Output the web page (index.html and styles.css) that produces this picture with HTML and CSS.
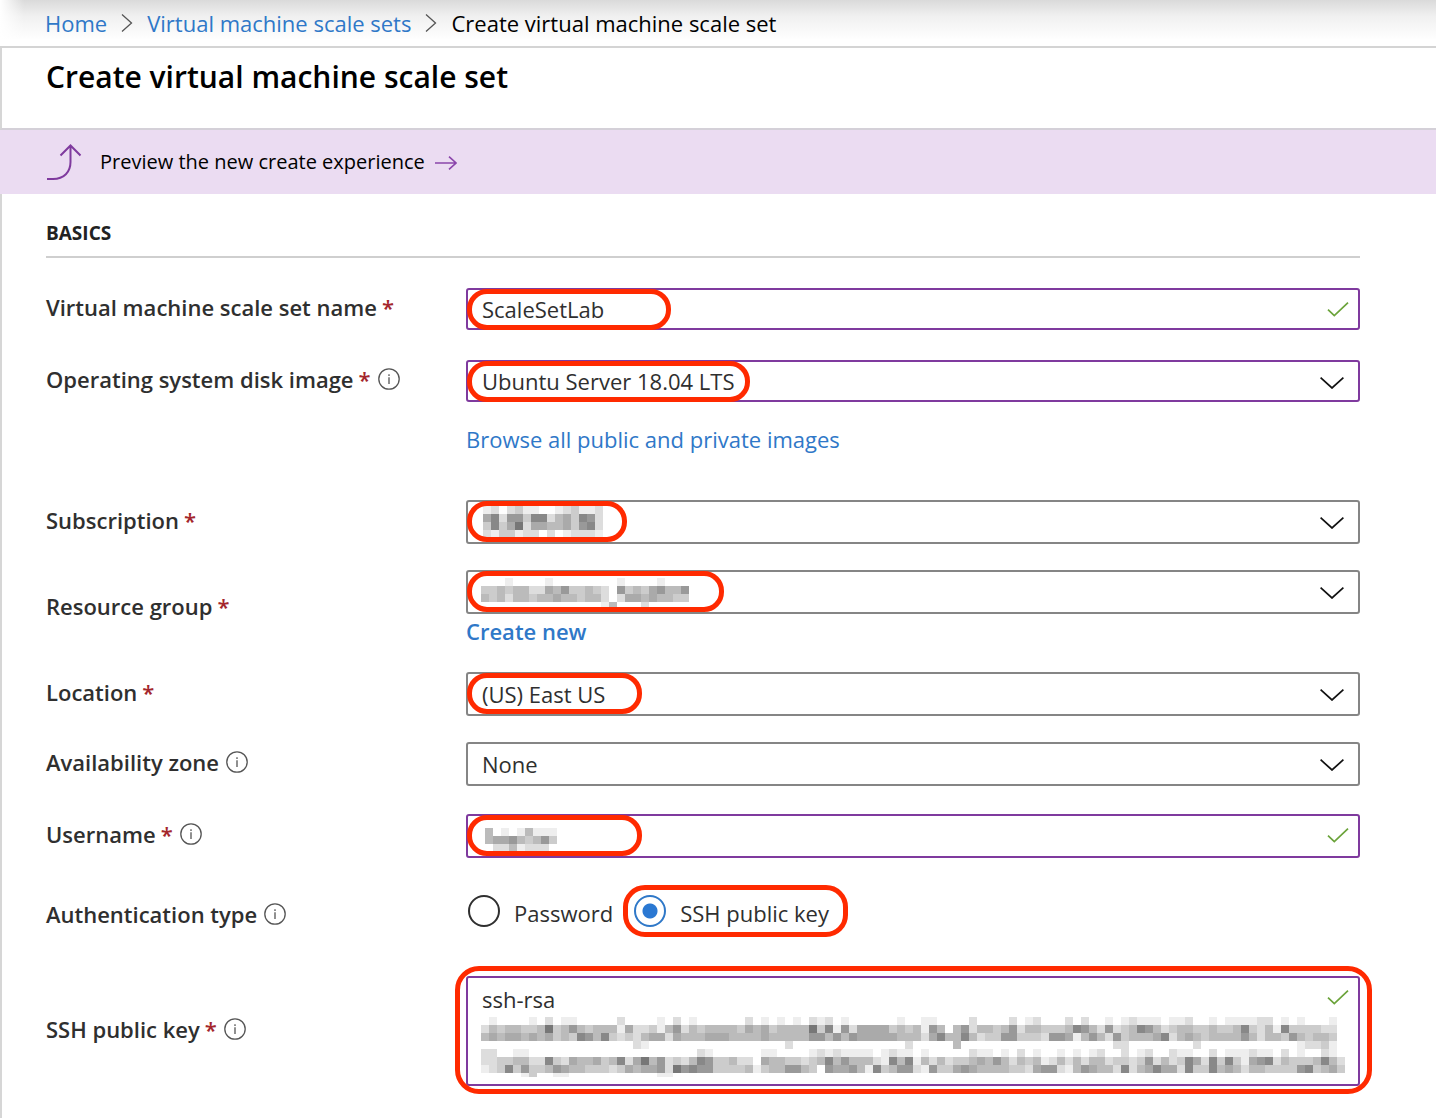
FILE: index.html
```html
<!DOCTYPE html>
<html lang="en">
<head>
<meta charset="utf-8">
<meta name="viewport" content="width=device-width, initial-scale=1">
<title>Create virtual machine scale set</title>
<link rel="stylesheet" href="styles.css">
<script src="mosaic.js" defer></script>
</head>
<body>
<svg class="sprite" aria-hidden="true">
  <symbol id="info" viewBox="0 0 22 22"><circle cx="11" cy="11" r="10.2" fill="none" stroke="#555" stroke-width="1.3"/><path d="M11 9.2V16M11 6.2v1.7" fill="none" stroke="#555" stroke-width="1.3"/></symbol>
  <symbol id="down" viewBox="0 0 24 12"><path d="M.6.7 12 11 23.4.7" fill="none" stroke="#111" stroke-width="1.7"/></symbol>
  <symbol id="tick" viewBox="0 0 22 15"><path d="M1 7.6 7.3 13.6 21 .7" fill="none" stroke="#6ba33a" stroke-width="1.7"/></symbol>
  <symbol id="next" viewBox="0 0 12 20"><path d="M1 1.500l9.500 8.500L1 18.500" fill="none" stroke="#555" stroke-width="1.3"/></symbol>
</svg>

<nav class="breadcrumb" aria-label="Breadcrumb">
  <a href="#">Home</a>
  <svg class="next"><use href="#next"/></svg>
  <a href="#">Virtual machine scale sets</a>
  <svg class="next"><use href="#next"/></svg>
  <span>Create virtual machine scale set</span>
</nav>

<header class="title"><h1>Create virtual machine scale set</h1></header>

<a class="banner" href="#">
  <svg class="banner-icon" viewBox="0 0 36 36"><path d="M1 35H7C18 35 24.500 28 24.500 18V2M14.500 11.500 24.500 1.500 34.500 11.500" fill="none" stroke="#7f3a9e" stroke-width="2"/></svg>
  <span>Preview the new create experience</span>
  <svg class="banner-arrow" viewBox="0 0 22 14"><path d="M0 7H21M14 .7 21 7 14 13.300" fill="none" stroke="#8a45ab" stroke-width="1.6"/></svg>
</a>

<main class="blade">
  <form class="form">
    <h2>BASICS</h2>

    <div class="row">
      <label class="label" for="name">Virtual machine scale set name <b>*</b></label>
      <div class="field valid">
        <input id="name" type="text" value="ScaleSetLab">
        <svg class="tick"><use href="#tick"/></svg>
        <span class="ring ring-name"></span>
      </div>
    </div>

    <div class="row row-image">
      <label class="label" for="image">Operating system disk image <b>*</b><svg class="info"><use href="#info"/></svg></label>
      <div class="field valid">
        <select id="image"><option>Ubuntu Server 18.04 LTS</option></select>
        <svg class="down"><use href="#down"/></svg>
        <span class="ring ring-image"></span>
      </div>
      <a class="browse" href="#">Browse all public and private images</a>
    </div>

    <div class="row tall">
      <label class="label" for="subscription">Subscription <b>*</b></label>
      <div class="field">
        <select id="subscription"><option></option></select>
        <svg class="mosaic mosaic-subscription" data-mosaic="subscription"></svg>
        <svg class="down"><use href="#down"/></svg>
        <span class="ring ring-subscription"></span>
      </div>
    </div>

    <div class="row tall">
      <label class="label" for="group">Resource group <b>*</b></label>
      <div class="stack">
        <div class="field">
          <select id="group"><option></option></select>
          <svg class="mosaic mosaic-group" data-mosaic="group"></svg>
          <svg class="down"><use href="#down"/></svg>
          <span class="ring ring-group"></span>
        </div>
        <a class="create" href="#">Create new</a>
      </div>
    </div>

    <div class="row tall">
      <label class="label" for="location">Location <b>*</b></label>
      <div class="field">
        <select id="location"><option>(US) East US</option></select>
        <svg class="down"><use href="#down"/></svg>
        <span class="ring ring-short"></span>
      </div>
    </div>

    <div class="row tall">
      <label class="label" for="zone">Availability zone<svg class="info"><use href="#info"/></svg></label>
      <div class="field">
        <select id="zone"><option>None</option></select>
        <svg class="down"><use href="#down"/></svg>
      </div>
    </div>

    <div class="row tall row-user">
      <label class="label" for="user">Username <b>*</b><svg class="info"><use href="#info"/></svg></label>
      <div class="field valid">
        <input id="user" type="text">
        <svg class="mosaic mosaic-user" data-mosaic="user"></svg>
        <svg class="tick"><use href="#tick"/></svg>
        <span class="ring ring-short"></span>
      </div>
    </div>

    <div class="row row-auth" role="radiogroup" aria-labelledby="auth">
      <span class="label" id="auth">Authentication type<svg class="info"><use href="#info"/></svg></span>
      <div class="radios">
        <label><input type="radio" name="auth"><span>Password</span></label>
        <label class="marked"><input type="radio" name="auth" checked><span>SSH public key</span></label>
      </div>
    </div>

    <div class="row row-key">
      <label class="label" for="key">SSH public key <b>*</b><svg class="info"><use href="#info"/></svg></label>
      <div class="field valid">
        <textarea id="key">ssh-rsa</textarea>
        <svg class="mosaic mosaic-key" data-mosaic="key"></svg>
        <svg class="tick"><use href="#tick"/></svg>
        <span class="ring ring-key"></span>
      </div>
    </div>
  </form>
</main>
</body>
</html>
```
FILE: styles.css
```css
* { box-sizing: border-box; }

body {
  margin: 0;
  background: #fff;
  color: #2f2f2f;
  font: 22px/30px "Open Sans", "Noto Sans", sans-serif;
}

a { color: #2f78c8; text-decoration: none; }
svg { display: block; flex: none; }
.sprite { position: absolute; width: 0; height: 0; }

.breadcrumb {
  display: flex;
  align-items: center;
  gap: 14px;
  height: 48px;
  padding: 0 45px;
  border-bottom: 2px solid #d4d4d4;
  background:
    linear-gradient(90deg, #fff, transparent 24px),
    linear-gradient(#dadada, #f0f0f0 16px, #fff 40px);
  color: #000;
}
.next { width: 12px; height: 20px; }

.title {
  height: 82px;
  padding: 8px 44px;
  border-left: 2px solid #d6d6d6;
  border-bottom: 2px solid #d4d0d8;
}
.title h1 { margin: 0; color: #000; font-size: 30px; line-height: 42px; font-weight: 600; }

.banner {
  display: flex;
  align-items: center;
  height: 64px;
  padding: 0 46px;
  background: #ebdcf2;
  color: #000;
  font-size: 20px;
}
.banner-icon { width: 36px; height: 36px; margin-right: 18px; }
.banner-arrow { width: 22px; height: 14px; margin: 2px 0 0 10px; }

.blade { padding: 24px 76px 32px 44px; border-left: 2px solid #d6d6d6; }

h2 {
  margin: 0 0 30px;
  padding-bottom: 8px;
  border-bottom: 2px solid #cfcfcf;
  color: #222;
  font-size: 19px;
  line-height: 30px;
  font-weight: 700;
}

.row {
  display: grid;
  grid-template-columns: 420px 1fr;
  align-items: center;
  margin-bottom: 30px;
}
.row.tall { margin-bottom: 26px; }
.row.row-image { margin-bottom: 46px; }
.row.row-user { margin: 28px 0 27px; }
.row.row-auth { margin-bottom: 39px; }

.label { display: flex; align-items: center; padding-bottom: 4px; font-weight: 600; }
.row-auth .label { padding: 6px 0 0; }
.label b { margin-left: 5px; color: #a4262c; font-weight: 600; }
.info { width: 22px; height: 22px; margin-left: 7px; }
.browse { grid-column: 2; margin-top: 22px; }
.create { display: block; margin-top: 2px; font-weight: 600; }

.field {
  position: relative;
  height: 42px;
  border: 2px solid #858585;
  border-radius: 3px;
}
.tall .field { height: 44px; }
.valid, .tall .valid { border-color: #7f3a9e; }
.row-key .field { height: 110px; }

input[type="text"], select, textarea {
  display: block;
  width: 100%;
  height: 100%;
  margin: 0;
  padding: 0 56px 0 14px;
  border: 0;
  outline: 0;
  appearance: none;
  background: transparent;
  color: inherit;
  font: inherit;
}
textarea { padding-top: 5px; line-height: 32px; resize: none; overflow: hidden; }

.down, .tick, .mosaic, .ring { position: absolute; pointer-events: none; }
.down { right: 14px; top: 15px; width: 24px; height: 12px; }
.tick { right: 9px; top: 12px; width: 22px; height: 15px; }

.ring { border: 5px solid #ff2a00; border-radius: 20px; left: -1px; top: -1px; height: 41px; }
.ring-name { width: 204px; }
.ring-image { width: 283px; }
.ring-subscription { width: 160px; }
.ring-group { width: 257px; }
.ring-short { width: 175px; }
.ring-key { inset: -12px -14px -10px -13px; height: auto; border-radius: 24px; }

.mosaic-subscription { left: 15px; top: 4px; width: 120px; height: 32px; }
.mosaic-group { left: 13px; top: 6px; width: 216px; height: 30px; }
.mosaic-user { left: 17px; top: 12px; width: 72px; height: 24px; }
.mosaic-key { left: 13px; top: 39px; width: 864px; height: 60px; }

.radios { display: flex; align-items: center; margin-left: 2px; gap: 12px; }
.radios label { display: flex; align-items: center; height: 52px; gap: 14px; }
.radios label span { padding-top: 3px; }
.radios .marked { margin-left: -2px; padding: 0 14px 0 6px; border: 5px solid #ff2a00; border-radius: 22px; }
.radios input {
  flex: none;
  width: 32px;
  height: 32px;
  margin: 0;
  appearance: none;
  border: 2px solid #2f2f2f;
  border-radius: 50%;
}
.radios input:checked {
  border-color: #2f78c8;
  background: radial-gradient(circle, #2b78d2 7px, transparent 8px);
}
```
FILE: mosaic.js
```js
// Redacted values: one hex digit per 8px cell, 0 is black and f is white.
// Spaces only group the digits in fives.
const CELL = 8;
const mosaics = {
  subscription: [
    "edfdc eeffe dceed",
    "a8d99 c88db ac89d",
    "c8ca7 daabb ac98d",
    "decce ddfdf eddde",
  ],
  group: [
    "fffef fffef fffff ffeff ffeff ff",
    "ccbcb bddab 9ccbc df9cb ca9bb 9f",
    "bcbdb bcbba bbcbb dfdaa babbc cf",
    "fffff fffff fffff ebfff dffff ff",
  ],
  user: [
    "bfefe beee",
    "baa9b cb9c",
    "fddbe dddf",
  ],
  key: [
    "fefff fefdf eefff ffdff ffefd fefff fffdf efefe fdedf effff ffe" +
      "ffeef fffdf fffdf edfff dfdff efede eefee dffef eeeed dfefe fffef",
    "dbcbb ccb7c b9bcb bbead dceb9 dbcbb bbcab acbbb b7c8e 9daaa acb" +
      "cbe9b fb9db bcb9d bbccc b89bd 9dcb8 9bdcb bccbc cb8cd be8cc ccddf",
    "babaa babac bc89b 8cdcd baada bbbaa abbbb abbbb b99b9 b9aaa aab" +
      "bbda8 bb8bd cc99c ccd99 aeb9b d9cbb ba8db abcbb bb9bd bbc9b cbbcf",
    "fffff fffff fffff ffffd effff fffff fffff fffdf fffff fffff fff" +
      "dffff fbfff fffff fffff fffff fddff fffff fdfff fffff ffffe ddcef",
    "ddffe effff fffff fffff fffff ffdef fffff eefff feded eeeef ede" +
      "efeff fffde efefd feffe fefed ffdfe dffde effdf eeede efdfe ffdef",
    "ddccb bdd8c dabba cb8da 7b9dc db89c cbddf abbcc dcb8b 9bbbd e8b" +
      "8ebdb dccba b9bdb cbedb dbdbb dccdc 9dbdc 8ad8c 8cea9 8dbcc cb8bd",
    "edc8c 9ccb9 abbcc cdcab aa9d7 9899c cccbe cbb99 bcf9a a9be8 cb9" +
      "9de9c ca9ab bbbcc da99d eb9ab bd8db a8aad 8cc8b abdbb cccc9 8cbac",
    "fffff ecffe effff fffff ffeef",
  ],
};

for (const svg of document.querySelectorAll("[data-mosaic]")) {
  mosaics[svg.dataset.mosaic].forEach((row, y) => {
    [...row.replaceAll(" ", "")].forEach((digit, x) => {
      const rect = document.createElementNS("http://www.w3.org/2000/svg", "rect");
      const grey = parseInt(digit, 16) * 17;
      rect.setAttribute("x", x * CELL);
      rect.setAttribute("y", y * CELL);
      rect.setAttribute("width", CELL);
      rect.setAttribute("height", CELL);
      rect.setAttribute("fill", `rgb(${grey},${grey},${grey})`);
      svg.append(rect);
    });
  });
}
```
